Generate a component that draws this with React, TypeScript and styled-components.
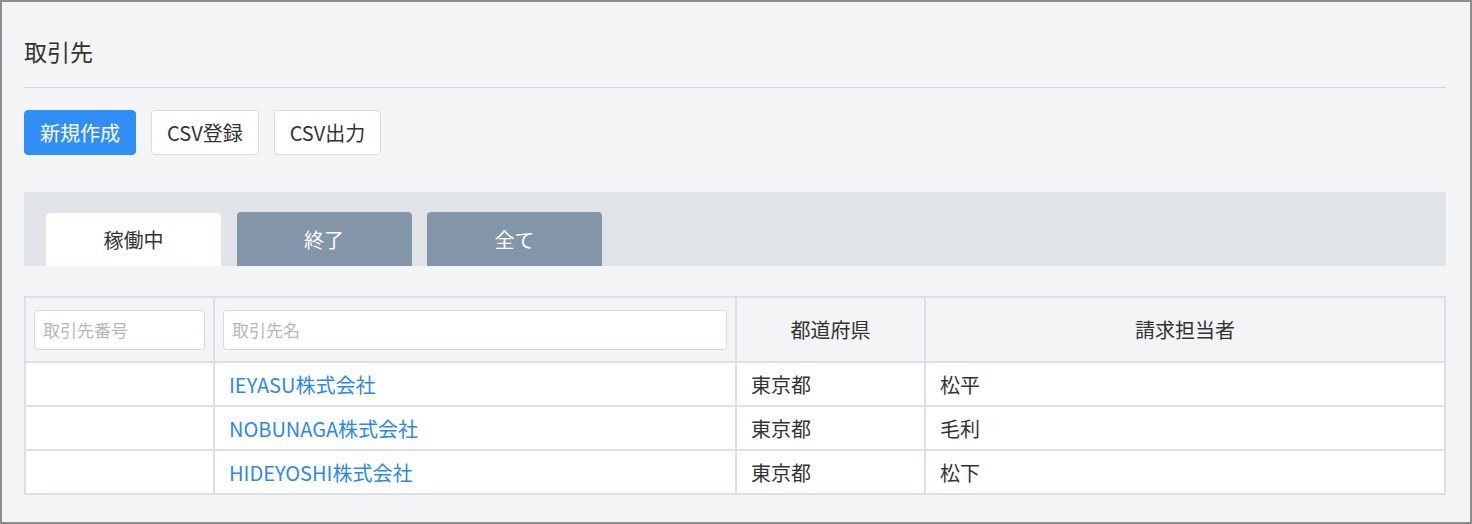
import React from "react";
import styled, { createGlobalStyle } from "styled-components";

const GlobalStyle = createGlobalStyle`
  html, body {
    margin: 0;
    padding: 0;
    background: #ffffff;
  }
  body {
    font-family: "Noto Sans CJK JP", "Noto Sans", sans-serif;
    color: #333;
  }
  * { box-sizing: border-box; }
`;

const Frame = styled.div`
  width: 1472px;
  height: 524px;
  border: 2px solid #8d8d8d;
  background: #f3f4f6;
  padding: 33px 24px 0 22px;
`;

const Title = styled.h1`
  margin: 0;
  font-size: 23px;
  font-weight: 400;
  line-height: 32px;
  color: #333;
`;

const Rule = styled.hr`
  margin: 20px 0 0;
  border: 0;
  border-top: 1px solid #d3d7db;
`;

const Toolbar = styled.div`
  display: flex;
  gap: 15px;
  margin-top: 22px;
`;

const Button = styled.button<{ $primary?: boolean }>`
  height: 45px;
  padding: 0 15px;
  font-family: inherit;
  font-size: 20px;
  line-height: 1;
  border-radius: 4px;
  cursor: pointer;
  border: 1px solid ${(p) => (p.$primary ? "#2f8ff7" : "#d8dce0")};
  background: ${(p) => (p.$primary ? "#2f8ff7" : "#ffffff")};
  color: ${(p) => (p.$primary ? "#ffffff" : "#333")};
`;

const TabBar = styled.div`
  display: flex;
  align-items: flex-end;
  gap: 15.5px;
  height: 74px;
  margin-top: 37px;
  padding-left: 22px;
  background: #e0e4e8;
`;

const Tab = styled.div<{ $active?: boolean }>`
  width: 175px;
  height: ${(p) => (p.$active ? "53px" : "54px")};
  display: flex;
  align-items: center;
  justify-content: center;
  font-size: 20px;
  border-radius: 4px 4px 0 0;
  background: ${(p) => (p.$active ? "#ffffff" : "#8395a8")};
  color: ${(p) => (p.$active ? "#333" : "#ffffff")};
`;

const Table = styled.table`
  width: 100%;
  margin-top: 30px;
  border-collapse: collapse;
  table-layout: fixed;
  border: 2px solid #dbe0e5;
`;

const HeadCell = styled.th`
  height: 65px;
  padding: 0 8px;
  border: 2px solid #dbe0e5;
  background: #f3f4f6;
  font-size: 20px;
  font-weight: 400;
  color: #333;
  text-align: center;
`;

const Cell = styled.td`
  height: 44px;
  padding: 0 14px;
  border: 2px solid #dbe0e5;
  background: #ffffff;
  font-size: 20px;
  color: #333;
`;

const SearchInput = styled.input`
  width: 100%;
  height: 40px;
  padding: 0 8px;
  border: 1px solid #d5dadf;
  border-radius: 4px;
  background: #ffffff;
  font-family: inherit;
  font-size: 17px;
  color: #333;
  &::placeholder {
    color: #b4b7bb;
  }
`;

const CompanyLink = styled.a`
  color: #2b8ae6;
  text-decoration: none;
`;

const rows = [
  { name: "IEYASU株式会社", pref: "東京都", person: "松平" },
  { name: "NOBUNAGA株式会社", pref: "東京都", person: "毛利" },
  { name: "HIDEYOSHI株式会社", pref: "東京都", person: "松下" },
];

export default function App() {
  return (
    <>
      <GlobalStyle />
      <Frame>
        <Title>取引先</Title>
        <Rule />
        <Toolbar>
          <Button $primary>新規作成</Button>
          <Button>CSV登録</Button>
          <Button>CSV出力</Button>
        </Toolbar>
        <TabBar>
          <Tab $active>稼働中</Tab>
          <Tab>終了</Tab>
          <Tab>全て</Tab>
        </TabBar>
        <Table>
          <colgroup>
            <col style={{ width: 189 }} />
            <col style={{ width: 522 }} />
            <col style={{ width: 189 }} />
            <col />
          </colgroup>
          <thead>
            <tr>
              <HeadCell>
                <SearchInput placeholder="取引先番号" />
              </HeadCell>
              <HeadCell>
                <SearchInput placeholder="取引先名" />
              </HeadCell>
              <HeadCell>都道府県</HeadCell>
              <HeadCell>請求担当者</HeadCell>
            </tr>
          </thead>
          <tbody>
            {rows.map((r) => (
              <tr key={r.name}>
                <Cell />
                <Cell>
                  <CompanyLink href="#">{r.name}</CompanyLink>
                </Cell>
                <Cell>{r.pref}</Cell>
                <Cell>{r.person}</Cell>
              </tr>
            ))}
          </tbody>
        </Table>
      </Frame>
    </>
  );
}
